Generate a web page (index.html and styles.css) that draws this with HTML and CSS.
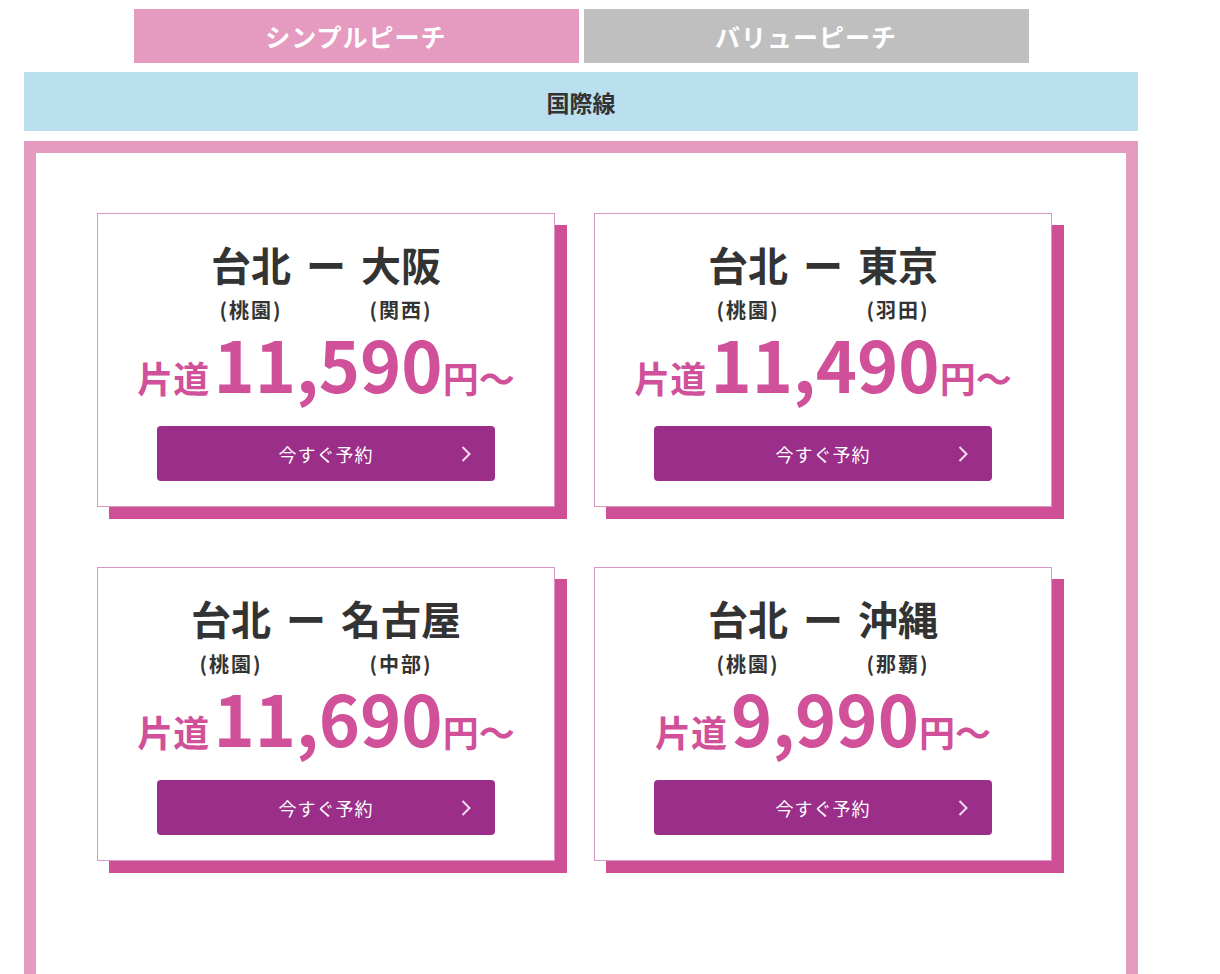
FILE: index.html
```html
<!DOCTYPE html>
<html lang="ja">

<head>
    <meta charset="UTF-8">
    <meta name="viewport" content="width=device-width, initial-scale=1.0">
    <title>国際線セール</title>
    <link rel="stylesheet" href="styles.css">
</head>

<body>
    <div class="wrapper">
        <!-- 運賃タイプの切り替え -->
        <div class="tabs">
            <div class="tab tab-active">シンプルピーチ</div>
            <div class="tab tab-off">バリューピーチ</div>
        </div>

        <div class="section-bar">国際線</div>

        <!-- 路線カード -->
        <div class="frame">
            <div class="routes">
                <div class="card">
                    <div class="route">
                        <div class="city"><span class="name">台北</span><span class="airport">(桃園)</span></div>
                        <span class="dash">ー</span>
                        <div class="city"><span class="name">大阪</span><span class="airport">(関西)</span></div>
                    </div>
                    <p class="price"><span class="unit">片道</span><span class="num">11,590</span><span class="unit">円〜</span></p>
                    <a class="book" href="#">今すぐ予約<svg class="chev" width="12" height="18" viewBox="0 0 12 18"><polyline points="2.5,2 9.5,9 2.5,16" /></svg></a>
                </div>

                <div class="card">
                    <div class="route">
                        <div class="city"><span class="name">台北</span><span class="airport">(桃園)</span></div>
                        <span class="dash">ー</span>
                        <div class="city"><span class="name">東京</span><span class="airport">(羽田)</span></div>
                    </div>
                    <p class="price"><span class="unit">片道</span><span class="num">11,490</span><span class="unit">円〜</span></p>
                    <a class="book" href="#">今すぐ予約<svg class="chev" width="12" height="18" viewBox="0 0 12 18"><polyline points="2.5,2 9.5,9 2.5,16" /></svg></a>
                </div>

                <div class="card">
                    <div class="route">
                        <div class="city"><span class="name">台北</span><span class="airport">(桃園)</span></div>
                        <span class="dash">ー</span>
                        <div class="city"><span class="name">名古屋</span><span class="airport">(中部)</span></div>
                    </div>
                    <p class="price"><span class="unit">片道</span><span class="num">11,690</span><span class="unit">円〜</span></p>
                    <a class="book" href="#">今すぐ予約<svg class="chev" width="12" height="18" viewBox="0 0 12 18"><polyline points="2.5,2 9.5,9 2.5,16" /></svg></a>
                </div>

                <div class="card">
                    <div class="route">
                        <div class="city"><span class="name">台北</span><span class="airport">(桃園)</span></div>
                        <span class="dash">ー</span>
                        <div class="city"><span class="name">沖縄</span><span class="airport">(那覇)</span></div>
                    </div>
                    <p class="price"><span class="unit">片道</span><span class="num">9,990</span><span class="unit">円〜</span></p>
                    <a class="book" href="#">今すぐ予約<svg class="chev" width="12" height="18" viewBox="0 0 12 18"><polyline points="2.5,2 9.5,9 2.5,16" /></svg></a>
                </div>
            </div>
        </div>
    </div>
</body>

</html>
```

FILE: styles.css
```css
body {
    margin: 0;
    font-family: "Noto Sans CJK JP", "Noto Sans", sans-serif;
    color: #333;
    background: #fff;
}

.wrapper {
    width: 1114px;
    margin-left: 24px;
    padding-top: 9px;
}

/* タブ */
.tabs {
    display: flex;
    justify-content: center;
    gap: 5px;
}

.tab {
    width: 445px;
    height: 54px;
    display: flex;
    align-items: center;
    justify-content: center;
    color: #fff;
    font-size: 25px;
    font-weight: bold;
    letter-spacing: 1px;
}

.tab-active {
    background-color: #e59bc0;
}

.tab-off {
    background-color: #bfbfbf;
}

.section-bar {
    margin-top: 9px;
    height: 59px;
    display: flex;
    align-items: center;
    justify-content: center;
    background-color: #bae0ef;
    font-size: 23px;
    font-weight: bold;
}

/* ピンクの枠 */
.frame {
    margin-top: 10px;
    border: 12px solid #e59bc0;
    padding: 60px 61px;
    min-height: 900px;
}

.routes {
    display: grid;
    grid-template-columns: repeat(2, 458px);
    column-gap: 39px;
    row-gap: 60px;
}

.card {
    background: #fff;
    border: 1px solid #d898c6;
    box-shadow: 12px 12px 0 #cf4f96;
    padding: 21px 59px 25px;
    text-align: center;
}

.route {
    display: flex;
    justify-content: center;
    align-items: flex-start;
    gap: 15px;
}

.city {
    display: flex;
    flex-direction: column;
    align-items: center;
}

.name,
.dash {
    font-size: 40px;
    font-weight: bold;
}

.airport {
    margin-top: 4px;
    font-size: 20px;
    font-weight: bold;
    line-height: 1.3;
    letter-spacing: 2px;
}

/* 価格は枠より広いので中央からはみ出させる */
.price {
    margin: 1px 0 0;
    display: flex;
    justify-content: center;
    align-items: baseline;
    font-size: 70px;
    line-height: 1.1;
    font-weight: bold;
    color: #d0519a;
    white-space: nowrap;
}

.price .unit {
    font-size: 36px;
}

.num {
    margin-left: 4px;
}

/* 予約ボタン */
.book {
    position: relative;
    margin-top: 25px;
    height: 55px;
    display: flex;
    align-items: center;
    justify-content: center;
    background-color: #9a2e89;
    border-radius: 4px;
    color: #fff;
    font-size: 18px;
    letter-spacing: 1px;
    text-decoration: none;
}

.chev {
    position: absolute;
    right: 23px;
    top: 19px;
    fill: none;
    stroke: #f6dcef;
    stroke-width: 2;
}
```
